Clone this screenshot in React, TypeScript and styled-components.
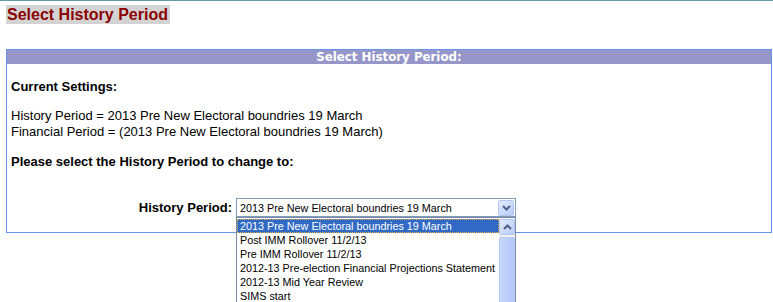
import React from "react"
import styled, { createGlobalStyle } from "styled-components"

const GlobalStyle = createGlobalStyle`
  html {
    overflow: hidden;
  }
  body {
    margin: 0;
    padding: 0;
    min-height: 100vh;
    background: #ffffff;
    font-family: "Liberation Sans", Arial, sans-serif;
    color: #000000;
  }
`

const Page = styled.div`
  border-top: 1px solid #5f9ea0;
  padding: 4px 0 0 6px;
`

const Title = styled.h1`
  display: inline-block;
  margin: 0;
  padding: 0 2px 0 1px;
  height: 19px;
  line-height: 19px;
  font-size: 16px;
  font-weight: bold;
  color: #8b0000;
  background: #d3d3d3;
`

const Panel = styled.div`
  margin-top: 25px;
  width: 766px;
  box-sizing: border-box;
  border: 1px solid #6495ed;
`

const PanelHeader = styled.div`
  height: 14px;
  line-height: 14px;
  background: #9696c8;
  color: #ffffff;
  text-align: center;
  font-family: "DejaVu Sans", Verdana, sans-serif;
  font-size: 11.8px;
  font-weight: bold;
`

const PanelBody = styled.div`
  padding: 15px 0 15px 4px;
  font-size: 13px;
  line-height: 16px;
`

const Para = styled.p<{ $gap?: number; $bold?: boolean }>`
  margin: ${({ $gap }) => $gap ?? 0}px 0 0 0;
  font-weight: ${({ $bold }) => ($bold ? "bold" : "normal")};
`

const FieldRow = styled.div`
  margin-top: 28px;
  display: flex;
  align-items: center;
  gap: 4px;
`

const FieldLabel = styled.label`
  width: 225px;
  text-align: right;
  font-weight: bold;
  margin-left: -4px;
`

const SelectWrap = styled.div`
  position: relative;
  width: 280px;
`

const SelectBox = styled.div`
  height: 19px;
  box-sizing: border-box;
  border: 1px solid #7f9db9;
  background: #ffffff;
  display: flex;
  align-items: center;
  justify-content: space-between;
  padding: 0 1px 0 3px;
  font-size: 10.8px;
`

const ArrowButton = styled.span`
  width: 16px;
  height: 16px;
  box-sizing: border-box;
  border: 1px solid #b3c6f3;
  border-radius: 2px;
  background: linear-gradient(135deg, #e4ecfe 0%, #c9d9fc 60%, #b6cbf7 100%);
  display: flex;
  align-items: center;
  justify-content: center;
  flex-shrink: 0;
`

const DropList = styled.div`
  position: absolute;
  top: 100%;
  left: 0;
  width: 280px;
  height: 100px;
  box-sizing: border-box;
  border: 1px solid #7a8aa8;
  background: #ffffff;
  display: flex;
  padding-top: 1px;
  z-index: 2;
`

const Options = styled.div`
  flex: 1;
  overflow: hidden;
  font-size: 10.8px;
`

const Option = styled.div<{ $selected?: boolean }>`
  height: 14px;
  line-height: 14px;
  padding-left: 3px;
  box-sizing: border-box;
  white-space: nowrap;
  background: ${({ $selected }) => ($selected ? "#316ac5" : "transparent")};
  color: ${({ $selected }) => ($selected ? "#ffffff" : "#000000")};
  outline: ${({ $selected }) => ($selected ? "1px dotted #e8b040" : "none")};
  outline-offset: -1px;
`

const ScrollBar = styled.div`
  width: 16px;
  display: flex;
  flex-direction: column;
  gap: 2px;
  background: #f3f3ee;
`

const ScrollThumb = styled.div`
  flex: 1;
  border: 1px solid #b6c9f5;
  border-radius: 2px;
  background: linear-gradient(90deg, #c6d6fd 0%, #bccffb 50%, #b4c8f7 100%);
`

const Chevron = ({ up }: { up?: boolean }) => (
  <svg width="9" height="6" viewBox="0 0 9 6">
    <polyline
      points={up ? "1,5 4.5,1.5 8,5" : "1,1 4.5,4.5 8,1"}
      fill="none"
      stroke="#4d6185"
      strokeWidth="2"
    />
  </svg>
)

const periods = [
  "2013 Pre New Electoral boundries 19 March",
  "Post IMM Rollover 11/2/13",
  "Pre IMM Rollover 11/2/13",
  "2012-13 Pre-election Financial Projections Statement",
  "2012-13 Mid Year Review",
  "SIMS start",
]

export default function App() {
  const current = periods[0]
  return (
    <>
      <GlobalStyle />
      <Page>
        <Title>Select History Period</Title>
        <Panel>
          <PanelHeader>Select History Period:</PanelHeader>
          <PanelBody>
            <Para $bold>Current Settings:</Para>
            <Para $gap={13}>
              History Period = {current}
              <br />
              Financial Period = ({current})
            </Para>
            <Para $gap={14} $bold>
              Please select the History Period to change to:
            </Para>
            <FieldRow>
              <FieldLabel>History Period:</FieldLabel>
              <SelectWrap>
                <SelectBox>
                  <span>{current}</span>
                  <ArrowButton>
                    <Chevron />
                  </ArrowButton>
                </SelectBox>
                <DropList>
                  <Options>
                    {periods.map(p => (
                      <Option key={p} $selected={p === current}>
                        {p}
                      </Option>
                    ))}
                  </Options>
                  <ScrollBar>
                    <ArrowButton>
                      <Chevron up />
                    </ArrowButton>
                    <ScrollThumb />
                  </ScrollBar>
                </DropList>
              </SelectWrap>
            </FieldRow>
          </PanelBody>
        </Panel>
      </Page>
    </>
  )
}
